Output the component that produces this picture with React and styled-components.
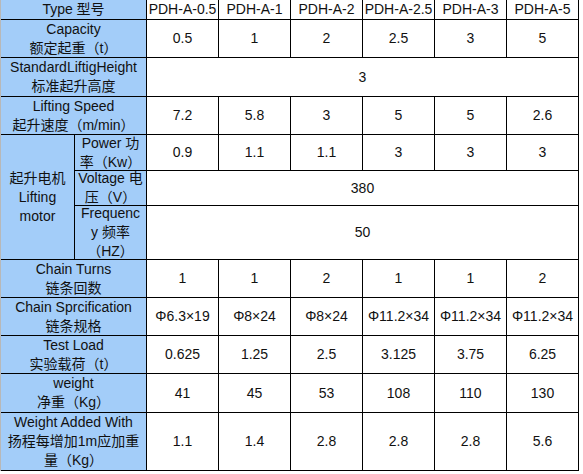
import React from 'react';
import styled, { createGlobalStyle } from 'styled-components';

const GlobalStyle = createGlobalStyle`
  html, body {
    margin: 0;
    padding: 0;
    background: #ffffff;
  }
  body {
    font-family: "Liberation Sans", Arial, "Noto Sans CJK SC", sans-serif;
    color: #111;
  }
`;

const Sheet = styled.div`
  width: 583px;
  height: 474px;
  overflow: hidden;
  background: #fff;
`;

const Frame = styled.div`
  display: inline-block;
  border-top: 1px solid #b8b8b8;
  border-left: 1px solid #b8b8b8;
  margin-top: -1px;
`;

const Grid = styled.div`
  display: grid;
  grid-template-columns: 73px 71px repeat(6, 71px);
  grid-template-rows: 19px 37px 38px 37px 35px 34px 53px 37px 37px 37px 38px 57px;
  gap: 1px;
  padding: 0 1px 1px 0;
  background: #000;
`;

const Cell = styled.div`
  display: flex;
  flex-direction: column;
  align-items: center;
  justify-content: center;
  text-align: center;
  font-size: 14px;
  line-height: 19px;
  background: ${p => (p.$label ? '#a3cdf9' : '#ffffff')};
  grid-column: ${p => (p.$span ? `span ${p.$span}` : 'auto')};
  grid-row: ${p => (p.$rows ? `span ${p.$rows}` : 'auto')};
  overflow: hidden;
`;

const Line = styled.span`
  display: block;
  white-space: nowrap;
`;

const models = ['PDH-A-0.5', 'PDH-A-1', 'PDH-A-2', 'PDH-A-2.5', 'PDH-A-3', 'PDH-A-5'];

const topRows = [
  { label: ['Capacity', '额定起重（t）'], values: ['0.5', '1', '2', '2.5', '3', '5'] },
  { label: ['StandardLiftigHeight', '标准起升高度'], merged: '3' },
  { label: ['Lifting Speed', '起升速度（m/min）'], values: ['7.2', '5.8', '3', '5', '5', '2.6'] },
];

const motorRows = [
  { label: ['Power 功', '率（Kw）'], values: ['0.9', '1.1', '1.1', '3', '3', '3'] },
  { label: ['Voltage 电', '压（V）'], merged: '380' },
  { label: ['Frequenc', 'y 频率', '（HZ）'], merged: '50' },
];

const bottomRows = [
  { label: ['Chain Turns', '链条回数'], values: ['1', '1', '2', '1', '1', '2'] },
  {
    label: ['Chain Sprcification', '链条规格'],
    values: ['Φ6.3×19', 'Φ8×24', 'Φ8×24', 'Φ11.2×34', 'Φ11.2×34', 'Φ11.2×34'],
  },
  { label: ['Test Load', '实验载荷（t）'], values: ['0.625', '1.25', '2.5', '3.125', '3.75', '6.25'] },
  { label: ['weight', '净重（Kg）'], values: ['41', '45', '53', '108', '110', '130'] },
  {
    label: ['Weight Added With', '扬程每增加1m应加重', '量（Kg）'],
    values: ['1.1', '1.4', '2.8', '2.8', '2.8', '5.6'],
  },
];

const Label = ({ lines, span, rows }) => (
  <Cell $label $span={span} $rows={rows}>
    {lines.map(l => <Line key={l}>{l}</Line>)}
  </Cell>
);

const Values = ({ row }) =>
  row.merged
    ? <Cell $span={6}>{row.merged}</Cell>
    : row.values.map((v, i) => <Cell key={i}>{v}</Cell>);

const SpecRow = ({ row, span }) => (
  <>
    <Label lines={row.label} span={span} />
    <Values row={row} />
  </>
);

export default function App() {
  return (
    <Sheet>
      <GlobalStyle />
      <Frame>
        <Grid>
          <Label lines={['Type 型号']} span={2} />
          {models.map(m => <Cell key={m}>{m}</Cell>)}

          {topRows.map(r => <SpecRow key={r.label[0]} row={r} span={2} />)}

          <Label lines={['起升电机', 'Lifting', 'motor']} rows={3} />
          {motorRows.map(r => <SpecRow key={r.label[0]} row={r} />)}

          {bottomRows.map(r => <SpecRow key={r.label[0]} row={r} span={2} />)}
        </Grid>
      </Frame>
    </Sheet>
  );
}
